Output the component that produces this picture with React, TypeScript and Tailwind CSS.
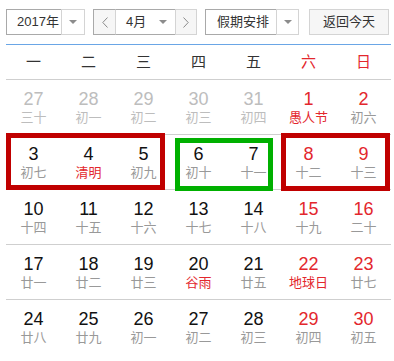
import React from 'react';

type Day = { n: number; l: string; other?: boolean; weekend?: boolean; fest?: boolean };

const weeks: Day[][] = [
  [
    { n: 27, l: '三十', other: true },
    { n: 28, l: '初一', other: true },
    { n: 29, l: '初二', other: true },
    { n: 30, l: '初三', other: true },
    { n: 31, l: '初四', other: true },
    { n: 1, l: '愚人节', weekend: true, fest: true },
    { n: 2, l: '初六', weekend: true },
  ],
  [
    { n: 3, l: '初七' },
    { n: 4, l: '清明', fest: true },
    { n: 5, l: '初九' },
    { n: 6, l: '初十' },
    { n: 7, l: '十一' },
    { n: 8, l: '十二', weekend: true },
    { n: 9, l: '十三', weekend: true },
  ],
  [
    { n: 10, l: '十四' },
    { n: 11, l: '十五' },
    { n: 12, l: '十六' },
    { n: 13, l: '十七' },
    { n: 14, l: '十八' },
    { n: 15, l: '十九', weekend: true },
    { n: 16, l: '二十', weekend: true },
  ],
  [
    { n: 17, l: '廿一' },
    { n: 18, l: '廿二' },
    { n: 19, l: '廿三' },
    { n: 20, l: '谷雨', fest: true },
    { n: 21, l: '廿五' },
    { n: 22, l: '地球日', weekend: true, fest: true },
    { n: 23, l: '廿七', weekend: true },
  ],
  [
    { n: 24, l: '廿八' },
    { n: 25, l: '廿九' },
    { n: 26, l: '初一' },
    { n: 27, l: '初二' },
    { n: 28, l: '初三' },
    { n: 29, l: '初四', weekend: true },
    { n: 30, l: '初五', weekend: true },
  ],
];

const heads = ['一', '二', '三', '四', '五', '六', '日'];

const Caret = () => (
  <svg width="8" height="4" viewBox="0 0 8 4">
    <path d="M0 0h8L4 4z" fill="#8c8c8c" />
  </svg>
);

const Chevron = ({ dir }: { dir: 'l' | 'r' }) => (
  <svg width="6" height="11" viewBox="0 0 6 11">
    <path d={dir === 'l' ? 'M5.5 0.5L0.8 5.5l4.7 5' : 'M0.5 0.5l4.7 5-4.7 5'} fill="none" stroke="#8a8a8a" strokeWidth="1" />
  </svg>
);

const DayCell = ({ d }: { d: Day }) => {
  const num = d.other ? 'text-[#bdbdbd]' : d.weekend ? 'text-[#e3272d]' : 'text-[#111]';
  const lunar = d.other ? 'text-[#bdbdbd]' : d.fest ? 'text-[#e3272d]' : 'text-[#999]';
  return (
    <div className="flex flex-col items-center pt-[10px]">
      <div className={`h-[18px] text-[18px] leading-[18px] font-['Liberation_Sans',Arial,sans-serif] ${num}`}>{d.n}</div>
      <div className={`mt-[2px] text-[13px] leading-[16px] ${lunar}`}>{d.l}</div>
    </div>
  );
};

export default function App() {
  return (
    <div className="w-[394px] h-[361px] bg-white overflow-hidden font-['Liberation_Sans','Noto_Sans_CJK_SC',sans-serif] text-[#333]">
      <div className="flex items-stretch h-[26px] mt-[9px] ml-[6px] text-[13px]">
        <div className="flex">
          <div className="w-[55px] flex items-center pl-[10px] bg-white border-l border-y border-[#a9a9a9]">2017年</div>
          <div className="w-[24px] flex items-center justify-center border border-[#d4d4d4]">
            <Caret />
          </div>
        </div>
        <div className="flex ml-[8px]">
          <div className="w-[22px] flex items-center justify-center bg-[#f6f6f6] border-l border-y border-[#a9a9a9]">
            <Chevron dir="l" />
          </div>
          <div className="w-[60px] flex items-center pl-[10px] border-l border-y border-l-[#d4d4d4] border-y-[#a9a9a9]">
            <span className="flex-1">4月</span>
            <span className="mr-[8px] flex"><Caret /></span>
          </div>
          <div className="w-[22px] flex items-center justify-center bg-[#f6f6f6] border border-[#d4d4d4]">
            <Chevron dir="r" />
          </div>
        </div>
        <div className="flex ml-[8px]">
          <div className="w-[71px] flex items-center pl-[11px] border-l border-y border-[#a9a9a9]">假期安排</div>
          <div className="w-[23px] flex items-center justify-center border border-[#d4d4d4]">
            <Caret />
          </div>
        </div>
        <div className="ml-[10px] w-[80px] flex items-center justify-center bg-[#f6f6f6] border border-[#d4d4d4]">返回今天</div>
      </div>

      <div className="ml-[6px] w-[385px] mt-[9px] border-t border-[#6aa6e6]">
        <div className="grid grid-cols-7 h-[34px] items-center text-[15px]">
          {heads.map((h, i) => (
            <div key={h} className={`text-center ${i > 4 ? 'text-[#e3272d]' : 'text-[#333]'}`}>{h}</div>
          ))}
        </div>
        {weeks.map((w, wi) => (
          <div key={wi} className={`relative grid grid-cols-7 h-[55px] border-t border-[#cfcfcf] ${wi === 1 ? 'z-10' : ''}`}>
            {w.map((d, di) => (
              <DayCell key={di} d={d} />
            ))}
            {wi === 1 && (
              <>
                <div className="absolute left-0 top-[-2px] w-[159px] h-[57px] border-[5px] border-[#c00000]" />
                <div className="absolute left-[169px] top-[3px] w-[98px] h-[53px] border-[5px] border-[#00b000]" />
                <div className="absolute left-[275px] top-[-2px] w-[109px] h-[58px] border-[5px] border-[#c00000]" />
              </>
            )}
          </div>
        ))}
      </div>
    </div>
  );
}
